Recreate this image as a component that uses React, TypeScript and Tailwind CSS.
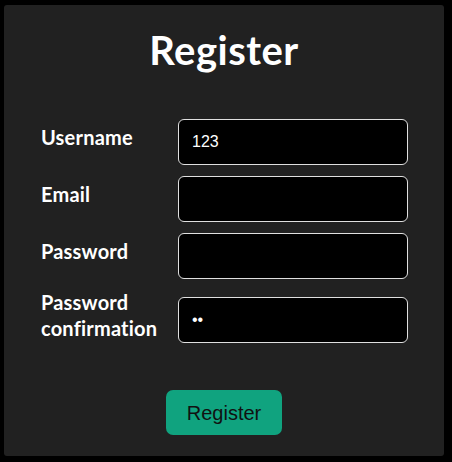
import React from "react";

export default function App() {
  const inputCls =
    "w-[230px] h-[46px] bg-black border border-[#e0e0e0] rounded-[6px] px-[13px] text-[16px] text-white font-['Liberation_Sans',Arial,sans-serif] outline-none";
  const labelCls =
    "w-[137px] text-[20px] tracking-[0.2px] font-bold font-['Lato',sans-serif]";
  return (
    <div className="w-[452px] h-[462px] bg-black pt-[5px] pl-[4px]">
      <div className="w-[440px] h-[451px] bg-[#212121] rounded-[3px] flex flex-col items-center text-white">
        <h1 className="mt-[21px] text-[40px] leading-[48px] tracking-[0.5px] font-bold font-['Lato',sans-serif]">
          Register
        </h1>
        <div className="mt-[45px] w-full pl-[37px] flex flex-col gap-[11px]">
          <div className="flex items-start">
            <label className={`${labelCls} mt-[6px] leading-[24px]`}>Username</label>
            <input defaultValue="123" className={inputCls} />
          </div>
          <div className="flex items-start">
            <label className={`${labelCls} mt-[6px] leading-[24px]`}>Email</label>
            <input className={inputCls} />
          </div>
          <div className="flex items-start">
            <label className={`${labelCls} mt-[6px] leading-[24px]`}>Password</label>
            <input type="password" className={inputCls} />
          </div>
          <div className="flex items-start">
            <label className={`${labelCls} -mt-[1px] leading-[26px]`}>
              Password
              <br />
              confirmation
            </label>
            <input
              type="password"
              defaultValue="12"
              className="mt-[7px] w-[230px] h-[46px] bg-black border border-[#e0e0e0] rounded-[6px] px-[13px] text-[16px] text-white font-['Liberation_Sans',Arial,sans-serif] outline-none"
            />
          </div>
        </div>
        <button className="mt-[47px] w-[116px] h-[45px] rounded-[7px] bg-[#10a37f] text-[#111] text-[20px] font-['Liberation_Sans',Arial,sans-serif]">
          Register
        </button>
      </div>
    </div>
  );
}
